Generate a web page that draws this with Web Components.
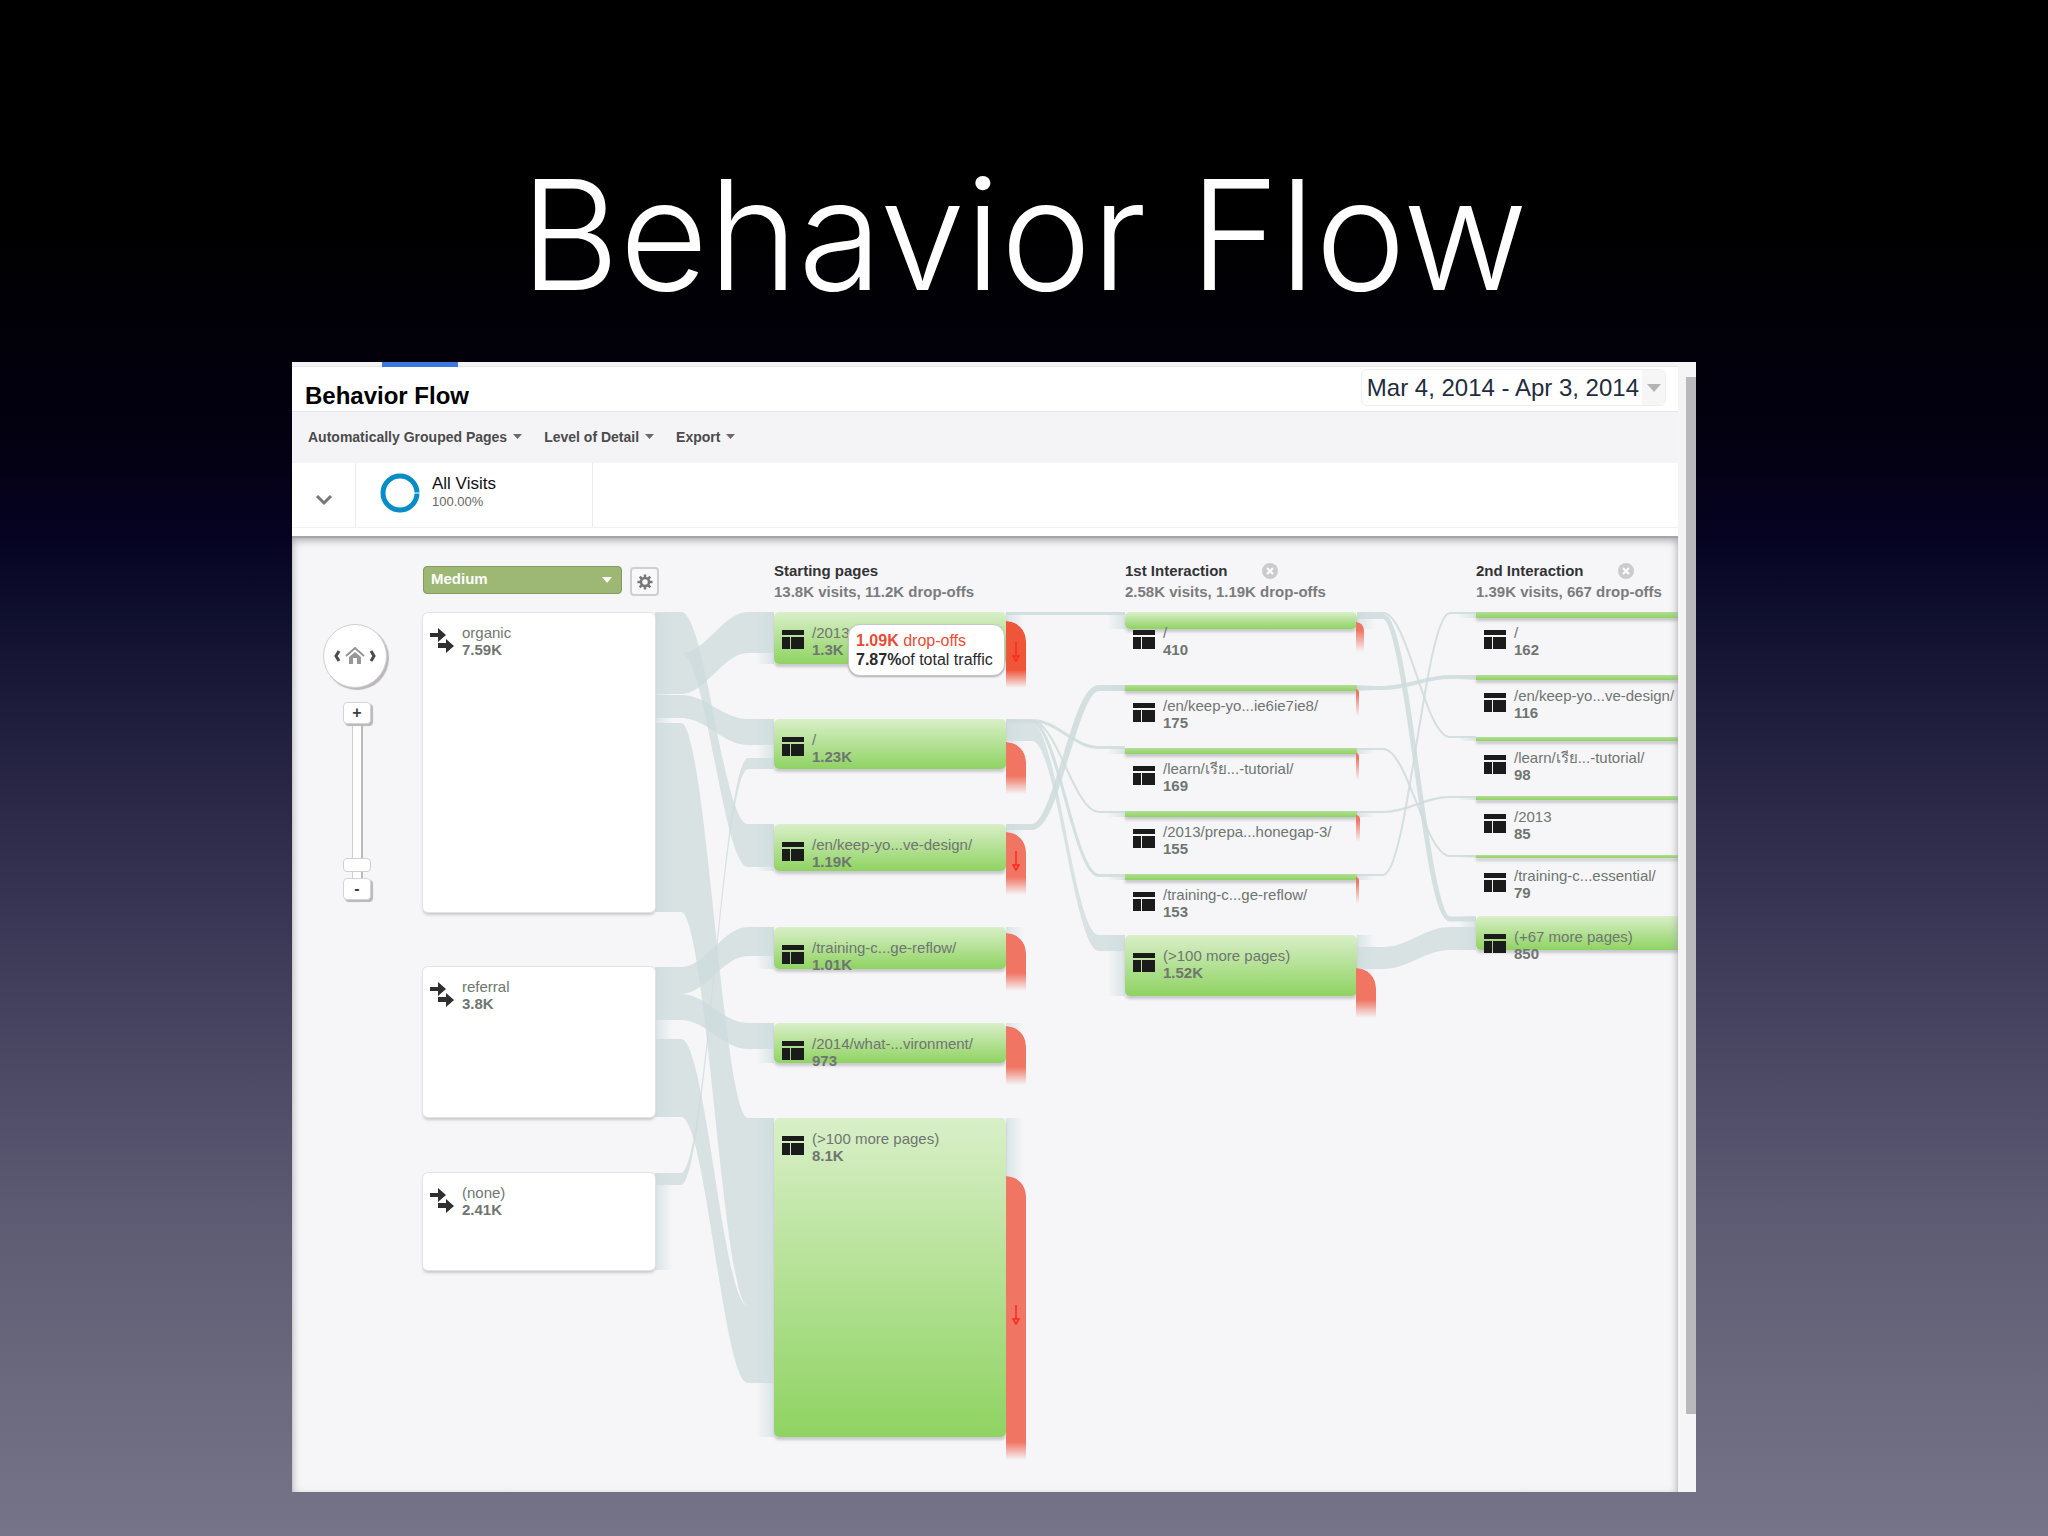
<!DOCTYPE html>
<html lang="en">
<head>
<meta charset="utf-8">
<title>Behavior Flow</title>
<style>
html{
    height: 100%;
}

body{
    margin: 0;
    min-height: 100%;
    font-family: "Liberation Sans", Arial, sans-serif;
    background: linear-gradient(#000 0%, #000 15%, #030010 28%, #060322 35%, #0f102e 40%, #22203f 48%, #363252 58%, #4b4864 69%, #5d5a73 79%, #6b697d 90%, #767489 100%);
}
</style>
</head>
<body>
<flow-slide>
    <span slot="title">Behavior Flow</span>
    <flow-panel>
        <flow-header slot="top" heading="Behavior Flow" range="Mar 4, 2014 - Apr 3, 2014"></flow-header>
        <flow-toolbar slot="top"></flow-toolbar>
        <flow-segment slot="top" name="All Visits" share="100.00%"></flow-segment>
        <flow-canvas></flow-canvas>
    </flow-panel>
</flow-slide>

<script>
const define=(name,element)=>customElements.define(name,element);

class FlowSlide extends HTMLElement{
    constructor(){
        super();
        this.attachShadow({mode:"open"}).innerHTML=`
        <style>
        :host{
            display: block;
            padding-bottom: 44px;
        }

        h1{
            margin: 0;
            padding: 137px 0 29px;
            color: #fff;
            font: 300 153px/196px Inter, "Liberation Sans", sans-serif;
            text-align: center;
            white-space: nowrap;
        }

        main{
            margin: 0 352px 0 292px;
        }
        </style>
        <h1><slot name="title"></slot></h1>
        <main><slot></slot></main>
        `;
    }
}

class FlowPanel extends HTMLElement{
    constructor(){
        super();
        this.attachShadow({mode:"open"}).innerHTML=`
        <style>
        :host{
            display: flex;
            background: #f6f5f8;
        }

        .content{
            flex: 1;
            min-width: 0;
        }

        .strip{
            height: 4px;
            background: #f4f4f6;
            border-bottom: 1px solid #e6e6e9;
        }

        .strip i{
            display: block;
            width: 76px;
            height: 5px;
            margin-left: 90px;
            background: #3c78e0;
        }

        .scrollbar{
            width: 10px;
            padding: 15px 0 78px 8px;
            display: flex;
            background: #f5f5f8;
        }

        .scrollbar i{
            flex: 1;
            background: #b9b8bd;
        }
        </style>
        <div class="content">
            <div class="strip"><i></i></div>
            <slot name="top"></slot>
            <slot></slot>
        </div>
        <div class="scrollbar"><i></i></div>
        `;
    }
}

class FlowHeader extends HTMLElement{
    constructor(){
        super();
        this.attachShadow({mode:"open"}).innerHTML=`
        <style>
        :host{
            display: flex;
            justify-content: space-between;
            align-items: flex-start;
            height: 44px;
            padding: 0 12px 0 13px;
            background: #fff;
            border-bottom: 1px solid #e4e4e7;
        }

        h2{
            margin: 0;
            padding-top: 15px;
            font-size: 24px;
            line-height: 28px;
            color: #000;
        }

        button{
            display: flex;
            align-items: center;
            height: 37px;
            margin-top: 2px;
            padding: 0 0 0 5px;
            border: 1px solid #eeeef0;
            border-radius: 6px;
            background: #fff;
            color: #1f2c3f;
            font: 24px/32px "Liberation Sans", Arial, sans-serif;
            overflow: hidden;
        }

        button i{
            display: flex;
            align-self: stretch;
            align-items: center;
            justify-content: center;
            width: 23px;
            margin-left: 3px;
            background: #f6f6f7;
        }
        </style>
        <h2>${this.getAttribute("heading")}</h2>
        <button type="button">${this.getAttribute("range")}<i><svg width="14" height="8"><path d="M0 0H14L7 8Z" fill="#b4b4b6"/></svg></i></button>
        `;
    }
}

class FlowToolbar extends HTMLElement{
    constructor(){
        super();
        const items=["Automatically Grouped Pages","Level of Detail","Export"];
        this.attachShadow({mode:"open"}).innerHTML=`
        <style>
        :host{
            display: flex;
            gap: 22px;
            height: 49px;
            padding: 0 0 2px 16px;
            background: #f4f4f6;
        }

        button{
            display: flex;
            align-items: center;
            gap: 6px;
            padding: 0;
            border: 0;
            background: none;
            color: #4b4b4d;
            font: bold 14px/20px "Liberation Sans", Arial, sans-serif;
        }
        </style>
        ${items.map(item=>`<button type="button">${item}<svg width="9" height="5"><path d="M0 0H9L4.500 5Z" fill="#6a6a6c"/></svg></button>`).join("")}
        `;
    }
}

class FlowSegment extends HTMLElement{
    constructor(){
        super();
        this.attachShadow({mode:"open"}).innerHTML=`
        <style>
        :host{
            display: flex;
            height: 64px;
            padding-bottom: 9px;
            background: linear-gradient(#f1f1f4, #f1f1f4) 0 64px / 100% 1px no-repeat #fff;
        }

        button{
            width: 64px;
            padding: 12px 0 0;
            border: 0;
            border-right: 1px solid #ececf0;
            background: none;
        }

        section{
            display: flex;
            gap: 12px;
            width: 212px;
            padding-left: 24px;
            border-right: 1px solid #ececf0;
        }

        section svg{
            margin-top: 10px;
        }

        p{
            margin: 0;
            padding-top: 11px;
            font-size: 17px;
            line-height: 20px;
            color: #111;
        }

        small{
            display: block;
            font-size: 13px;
            line-height: 16px;
            color: #666;
        }
        </style>
        <button type="button" aria-label="Segments"><svg width="18" height="12" fill="none" stroke="#77777a" stroke-width="3"><path d="M2 2L9 9L16 2"/></svg></button>
        <section>
            <svg width="40" height="40" fill="none"><circle cx="20" cy="20" r="17" stroke="#058dc7" stroke-width="5"/><path d="M33 20H40" stroke="#fff" stroke-width="1"/></svg>
            <p>${this.getAttribute("name")}<small>${this.getAttribute("share")}</small></p>
        </section>
        `;
    }
}

class FlowNav extends HTMLElement{
    constructor(){
        super();
        this.attachShadow({mode:"open"}).innerHTML=`
        <style>
        :host{
            display: flex;
            flex-direction: column;
            align-items: center;
            width: 68px;
        }

        .pan{
            display: flex;
            align-items: center;
            justify-content: center;
            gap: 4px;
            box-sizing: border-box;
            width: 64px;
            height: 64px;
            margin: 0 4px 14px 0;
            border: 1px solid #d0cfd2;
            border-radius: 50%;
            background: #fff;
            box-shadow: 2px 2px 1px #b9b7bb;
        }

        button{
            padding: 0;
            border: 0;
            background: none;
            line-height: 0;
        }

        .zoom{
            width: 28px;
            height: 22px;
            border: 1px solid #d4d3d6;
            border-radius: 4px;
            background: #fff;
            box-shadow: 2px 2px 1px #b9b7bb;
            color: #3f3d4a;
            font: bold 16px/18px "Liberation Sans", Arial, sans-serif;
            z-index: 1;
        }

        input{
            writing-mode: vertical-lr;
            direction: rtl;
            appearance: none;
            width: 28px;
            height: 154px;
            margin: 0;
            background: linear-gradient(90deg, transparent 9px, #cfced2 9px, #cfced2 10px, #fff 10px, #fff 18px, #bcbabf 18px, #bcbabf 20px, transparent 20px);
        }

        input::-webkit-slider-thumb{
            appearance: none;
            width: 28px;
            height: 14px;
            border: 1px solid #cfced2;
            border-radius: 4px;
            background: #fff;
        }
        </style>
        <div class="pan">
            <button type="button" aria-label="Back"><svg width="8" height="12" fill="none" stroke="#4b4b4d" stroke-width="3"><path d="M6 1L3 6L6 11"/></svg></button>
            <button type="button" aria-label="Home"><svg width="20" height="18"><path d="M1 9L10 1L19 9" fill="none" stroke="#97979a" stroke-width="2"/><path d="M4 10L10 5L16 10V17H12V11H8V17H4Z" fill="#97979a"/></svg></button>
            <button type="button" aria-label="Forward"><svg width="8" height="12" fill="none" stroke="#4b4b4d" stroke-width="3"><path d="M2 1L5 6L2 11"/></svg></button>
        </div>
        <button class="zoom" type="button">+</button>
        <input type="range" min="0" max="100" value="4" aria-label="Zoom">
        <button class="zoom" type="button">-</button>
        `;
    }
}

class FlowDimension extends HTMLElement{
    constructor(){
        super();
        this.attachShadow({mode:"open"}).innerHTML=`
        <style>
        :host{
            display: flex;
            align-items: flex-start;
            gap: 8px;
        }

        select{
            appearance: none;
            box-sizing: border-box;
            width: 199px;
            height: 28px;
            padding: 0 8px 2px 7px;
            border: 1px solid #83995f;
            border-radius: 4px;
            background: #9cb874;
            color: #fff;
            font: bold 15px/20px "Liberation Sans", Arial, sans-serif;
        }

        label{
            display: grid;
            align-items: center;
        }

        label > *{
            grid-area: 1 / 1;
        }

        label svg{
            justify-self: end;
            margin-right: 10px;
            pointer-events: none;
        }

        button{
            width: 29px;
            height: 29px;
            margin-top: 1px;
            padding: 0;
            border: 2px solid #cfced2;
            border-radius: 4px;
            background: #f8f8fa;
            line-height: 0;
        }
        </style>
        <label>
            <select aria-label="Dimension"><option>Medium</option></select>
            <svg width="10" height="6"><path d="M0 0H10L5 6Z" fill="#fff"/></svg>
        </label>
        <button type="button" aria-label="Settings"><svg width="16" height="16" viewBox="-8 -8 16 16" fill="none" stroke="#77777a"><circle r="4" stroke-width="2.500"/><path d="M0 -7.500V-4M0 7.500V4M-7.500 0H-4M7.500 0H4M-5.300 -5.300L-3 -3M5.300 5.300L3 3M-5.300 5.300L-3 3M5.300 -5.300L3 -3" stroke-width="2.500"/></svg></button>
        `;
    }
}

class FlowColumnTitle extends HTMLElement{
    constructor(){
        super();
        const close=`<button type="button" aria-label="Remove step"><svg width="16" height="16"><circle cx="8" cy="8" r="8" fill="#cbcacd"/><path d="M5 5L11 11M11 5L5 11" stroke="#fff" stroke-width="2"/></svg></button>`;
        this.attachShadow({mode:"open"}).innerHTML=`
        <style>
        :host{
            display: block;
            font-weight: bold;
            font-size: 15px;
            line-height: 21px;
            color: #7b7b7d;
            white-space: nowrap;
        }

        div{
            display: flex;
            align-items: center;
            gap: 34px;
            color: #333335;
        }

        button{
            padding: 0;
            border: 0;
            background: none;
            line-height: 0;
        }
        </style>
        <div>${this.getAttribute("name")}${this.hasAttribute("removable")?close:""}</div>
        <slot></slot>
        `;
    }
}

class FlowNode extends HTMLElement{
    constructor(){
        super();
        this.shadowDOM=this.attachShadow({mode:"open"});
    }

    set node(node){
        this._node=node;
        this.render();
    }

    render(){
        const {name,count,bar,source}=this._node;
        const kind=source?"source":bar<10?"thin":"";
        const icon=source
            ? `<svg width="24" height="25" fill="#2f2f31"><path d="M0 5H8V0L16 7L8 14V9H0ZM8 15H16V11L24 18L16 25V20H8Z"/></svg>`
            : `<svg width="22" height="19" fill="#1b1b1b"><path d="M0 0H22V5H0ZM0 7H8V19H0ZM9 7H22V19H9Z"/></svg>`;
        this.shadowDOM.innerHTML=`
        <style>
        :host{
            position: absolute;
            display: grid;
            align-items: start;
            width: 232px;
            font-size: 15px;
            line-height: 17px;
            color: #6f7571;
            white-space: nowrap;
        }

        .bar, .label{
            grid-area: 1 / 1;
        }

        .bar{
            height: ${bar}px;
            border-radius: 5px;
            background: linear-gradient(#d9efc8, #8fd362);
            box-shadow: 0 3px 3px #c9c8cd;
        }

        .bar.thin{
            border-radius: 0;
            background: linear-gradient(#b4dd97, #8fd362);
        }

        .bar.source{
            background: #fff;
            box-shadow: 0 0 0 1px #e3e2e6, 0 3px 3px #c9c8cd;
        }

        .label{
            display: flex;
            gap: 8px;
            padding: 12px 0 0 8px;
        }

        .label svg{
            margin-top: 6px;
            flex: none;
        }

        .source + .label{
            padding: 11px 0 0 7px;
        }

        .source + .label svg{
            margin-top: 4px;
        }

        b{
            display: block;
        }
        </style>
        <div class="bar ${kind}"></div>
        <div class="label">${icon}<span>${name}<b>${count}</b></span></div>
        `;
    }
}

class FlowDrop extends HTMLElement{
    constructor(){
        super();
        this.shadowDOM=this.attachShadow({mode:"open"});
    }

    set drop(drop){
        const arrow=`<svg width="8" height="20" fill="none" stroke="#fb2a20" stroke-width="1.500"><path d="M4 0V14M1 14H7L4 19Z"/></svg>`;
        this.shadowDOM.innerHTML=`
        <style>
        :host{
            position: absolute;
            display: flex;
            align-items: center;
            justify-content: center;
            width: ${drop.w}px;
            height: ${drop.h}px;
            border-top-right-radius: ${drop.w}px;
            background: ${drop.active?"#ef5539":"#f07563"};
            mask-image: linear-gradient(#000 calc(100% - ${drop.w<20?22:18}px), transparent);
        }

        svg{
            margin-bottom: 6px;
        }
        </style>
        ${drop.arrow?arrow:""}
        `;
    }
}

class FlowTooltip extends HTMLElement{
    constructor(){
        super();
        this.attachShadow({mode:"open"}).innerHTML=`
        <style>
        :host{
            position: absolute;
            display: block;
            padding: 6px 11px 6px 7px;
            border: 1px solid #c3c8c5;
            border-radius: 12px;
            background: #fff;
            box-shadow: 0 1px 2px #aaa;
            font-size: 16px;
            line-height: 19px;
            color: #2b2b2d;
            white-space: nowrap;
        }

        div{
            color: #e94b35;
        }
        </style>
        <div><slot name="drop"></slot></div>
        <slot></slot>
        `;
    }
}

// step columns, measured from the left edge of the canvas
const columns=[131,482,833,1184];

// y, bar height, label, visits
const nodes=[
    [[77,299,"organic","7.59K"],[431,150,"referral","3.8K"],[637,97,"(none)","2.41K"]],
    [[76,52,"/2013","1.3K"],[183,50,"/","1.23K"],[288,47,"/en/keep-yo...ve-design/","1.19K"],[391,42,"/training-c...ge-reflow/","1.01K"],[487,40,"/2014/what-...vironment/","973"],[582,319,"(&gt;100 more pages)","8.1K"]],
    [[76,17,"/","410"],[149,6,"/en/keep-yo...ie6ie7ie8/","175"],[212,6,"/learn/เรีย...-tutorial/","169"],[275,6,"/2013/prepa...honegap-3/","155"],[338,6,"/training-c...ge-reflow/","153"],[399,61,"(&gt;100 more pages)","1.52K"]],
    [[76,6,"/","162"],[139,5,"/en/keep-yo...ve-design/","116"],[201,4,"/learn/เรีย...-tutorial/","98"],[260,4,"/2013","85"],[319,3,"/training-c...essential/","79"],[380,34,"(+67 more pages)","850"]]
];

const drops=[
    {x:714,y:85,w:20,h:67,arrow:true,active:true},
    {x:714,y:206,w:20,h:52},
    {x:714,y:296,w:20,h:63,arrow:true},
    {x:714,y:397,w:20,h:58},
    {x:714,y:490,w:20,h:59},
    {x:714,y:640,w:20,h:284,arrow:true},
    {x:1064,y:86,w:8,h:30},
    {x:1064,y:153,w:3,h:27},
    {x:1064,y:217,w:3,h:27},
    {x:1064,y:279,w:4,h:27},
    {x:1064,y:341,w:3,h:27},
    {x:1064,y:432,w:20,h:50}
];

// from column, y, height, y in the next column, height there
const links=[
    [0,76,41,288,43],[0,117,41,76,41],[0,159,23,183,26],[0,187,189,582,188],
    [0,431,27,391,29],[0,458,26,487,26],[0,503,78,770,77],[0,637,12,222,11],
    [1,76,3,76,3],[1,183,3,210,3],[1,184,2,275,2],[1,185,3,338,3],[1,188,17,399,16],[1,288,6,149,6],
    [2,76,2,200,2],[2,78,5,380,6],[2,150,4,139,4],[2,212,2,319,2],[2,275,2,260,2],[2,338,2,76,2],[2,411,22,391,23]
];

class FlowCanvas extends HTMLElement{
    constructor(){
        super();
        this.shadowDOM=this.attachShadow({mode:"open"});
        this.render();
    }

    link([column,y,h,y2,h2]){
        const x=columns[column]+232;
        const end=columns[column+1];
        const a=x+26, b=end-26;
        // narrow links keep their width on the steep part
        if(h<7){
            const m=y+h/2, m2=y2+h2/2;
            return `<path class="line" stroke-width="${h}" d="M${x} ${m}H${a}C${a+25} ${m} ${b-25} ${m2} ${b} ${m2}H${end}"/>`;
        }
        return `<path d="M${x} ${y}H${a}C${a+25} ${y} ${b-25} ${y2} ${b} ${y2}H${end}V${y2+h2}H${b}C${b-25} ${y2+h2} ${a+25} ${y+h} ${a} ${y+h}H${x}Z"/>`;
    }

    fades(){
        return nodes.map((column,i)=>column.map(([y,h])=>{
            const left=i>0?`<rect x="${columns[i]-18}" y="${y}" width="18" height="${h}" fill="url(#in)"/>`:"";
            const right=i<3?`<rect x="${columns[i]+232}" y="${y}" width="18" height="${h}" fill="url(#out)"/>`:"";
            return left+right;
        }).join("")).join("");
    }

    render(){
        this.shadowDOM.innerHTML=`
        <style>
        :host{
            position: relative;
            display: block;
            height: 956px;
            overflow: hidden;
            background: #f6f6f8;
        }

        :host::after{
            content: "";
            position: absolute;
            inset: 0;
            box-shadow: inset 0 4px 8px #a3a2a7, inset 0 2px 1px #aaa9ad;
            pointer-events: none;
        }

        .flows{
            position: absolute;
            left: 0;
            top: 0;
            fill: #cedbdc;
            fill-opacity: .75;
        }

        .line{
            fill: none;
            stroke: #cedbdc;
            stroke-opacity: .85;
        }

        flow-nav, flow-dimension, flow-column-title{
            position: absolute;
        }
        </style>
        <svg class="flows" width="1386" height="956">
            <defs>
                <linearGradient id="out"><stop stop-color="#cfdee0"/><stop offset="1" stop-color="#cfdee0" stop-opacity="0"/></linearGradient>
                <linearGradient id="in"><stop stop-color="#cfdee0" stop-opacity="0"/><stop offset="1" stop-color="#cfdee0"/></linearGradient>
            </defs>
            ${this.fades()}
            ${links.map(link=>this.link(link)).join("")}
        </svg>
        <flow-nav style="left: 31px; top: 88px"></flow-nav>
        <flow-dimension style="left: 131px; top: 30px"></flow-dimension>
        <flow-column-title name="Starting pages" style="left: 482px; top: 24px">13.8K visits, 11.2K drop-offs</flow-column-title>
        <flow-column-title name="1st Interaction" removable style="left: 833px; top: 24px">2.58K visits, 1.19K drop-offs</flow-column-title>
        <flow-column-title name="2nd Interaction" removable style="left: 1184px; top: 24px">1.39K visits, 667 drop-offs</flow-column-title>
        `;
        nodes.forEach((column,i)=>column.forEach(([y,bar,name,count])=>{
            const element=document.createElement("flow-node");
            element.node={name,count,bar,source:i===0};
            this.place(element,columns[i],y);
        }));
        drops.forEach(drop=>{
            const element=document.createElement("flow-drop");
            element.drop=drop;
            this.place(element,drop.x,drop.y);
        });
        const tooltip=document.createElement("flow-tooltip");
        tooltip.innerHTML=`<span slot="drop"><b>1.09K</b> drop-offs</span><b>7.87%</b>of total traffic`;
        this.place(tooltip,556,88);
    }

    place(element,x,y){
        element.style.left=`${x}px`;
        element.style.top=`${y}px`;
        this.shadowDOM.appendChild(element);
    }
}

define("flow-slide",FlowSlide);
define("flow-panel",FlowPanel);
define("flow-header",FlowHeader);
define("flow-toolbar",FlowToolbar);
define("flow-segment",FlowSegment);
define("flow-nav",FlowNav);
define("flow-dimension",FlowDimension);
define("flow-column-title",FlowColumnTitle);
define("flow-node",FlowNode);
define("flow-drop",FlowDrop);
define("flow-tooltip",FlowTooltip);
define("flow-canvas",FlowCanvas);
</script>
</body>
</html>
